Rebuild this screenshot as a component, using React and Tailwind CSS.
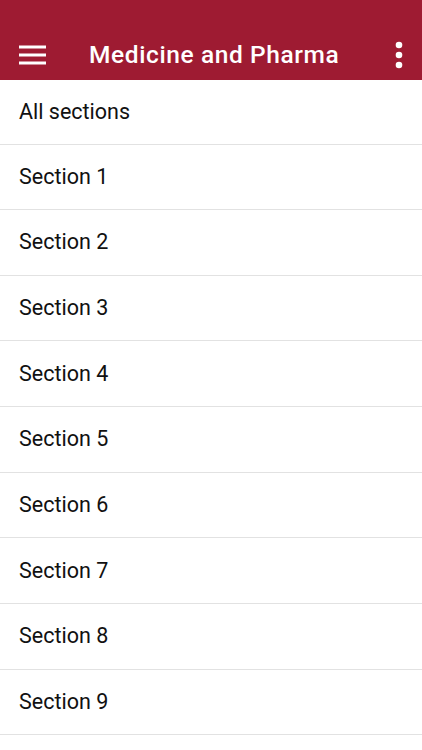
export default function App() {
  const items = ["All sections", "Section 1", "Section 2", "Section 3", "Section 4", "Section 5", "Section 6", "Section 7", "Section 8", "Section 9"];
  return (
    <div className="w-[422px] h-[750px] overflow-hidden bg-white" style={{ fontFamily: "Roboto, 'Liberation Sans', sans-serif" }}>
      <div className="h-[80px] bg-[#9e1b32] flex items-end">
        <div className="h-[50px] w-full flex items-center">
          <div className="w-[19px]" />
          <svg width="28" height="20" viewBox="0 0 28 20" className="shrink-0">
            <rect x="0" y="0.5" width="27" height="3" fill="#fff" />
            <rect x="0" y="8.5" width="27" height="3" fill="#fff" />
            <rect x="0" y="16.5" width="27" height="3" fill="#fff" />
          </svg>
          <div className="ml-[42px] text-white text-[24.5px] tracking-[0.6px] font-medium leading-none flex-1">Medicine and Pharma</div>
          <svg width="8" height="28" viewBox="0 0 8 28" className="shrink-0 mr-[19px]">
            <circle cx="4" cy="4" r="3.3" fill="#fff" />
            <circle cx="4" cy="14" r="3.3" fill="#fff" />
            <circle cx="4" cy="24" r="3.3" fill="#fff" />
          </svg>
        </div>
      </div>
      <div className="flex flex-col">
        {items.map((t, i) => (
          <div key={t} className={`${i === 0 ? "h-[64.5px]" : "h-[65.67px]"} shrink-0 flex items-center pl-[19px] border-b-[1.5px] border-[#e2e2e2] text-[21.5px] text-[#111]`}>
            {t}
          </div>
        ))}
      </div>
    </div>
  );
}
